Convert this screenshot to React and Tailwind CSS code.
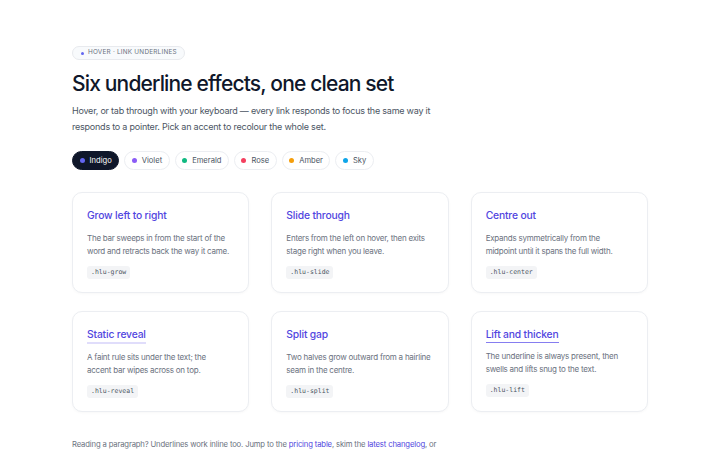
import React from 'react'

const accents = [
    { name: 'Indigo', dot: 'bg-[#6366f1]', active: true },
    { name: 'Violet', dot: 'bg-[#8b5cf6]' },
    { name: 'Emerald', dot: 'bg-[#10b981]' },
    { name: 'Rose', dot: 'bg-[#f43f5e]' },
    { name: 'Amber', dot: 'bg-[#f59e0b]' },
    { name: 'Sky', dot: 'bg-[#0ea5e9]' },
]

// each description is split where the reference wraps it
const effects = [
    { title: 'Grow left to right', lines: ['The bar sweeps in from the start of the', 'word and retracts back the way it came.'], cls: '.hlu-grow' },
    { title: 'Slide through', lines: ['Enters from the left on hover, then exits', 'stage right when you leave.'], cls: '.hlu-slide' },
    { title: 'Centre out', lines: ['Expands symmetrically from the', 'midpoint until it spans the full width.'], cls: '.hlu-center' },
    { title: 'Static reveal', lines: ['A faint rule sits under the text; the', 'accent bar wipes across on top.'], cls: '.hlu-reveal', line: 'faint' },
    { title: 'Split gap', lines: ['Two halves grow outward from a hairline', 'seam in the centre.'], cls: '.hlu-split' },
    { title: 'Lift and thicken', lines: ['The underline is always present, then', 'swells and lifts snug to the text.'], cls: '.hlu-lift', line: 'solid' },
]

const EffectCard = ({ title, lines, cls, line }) => {
    const underline = line === 'faint'
        ? 'border-b-2 border-[#e0ddfb]'
        : line === 'solid'
            ? 'border-b-[1.5px] border-[#867df0]'
            : 'border-b-2 border-transparent'

    return (
        <div className="flex flex-col items-start rounded-[10px] border border-[#eceef2] bg-white px-[14px] pt-[14px] h-[101px] shadow-[0_1px_3px_rgba(15,23,42,0.03)]">
            <a href="#" className={`block text-[10.3px] leading-[16px] font-medium text-[#5145e0] tracking-[-0.015em] ${underline}`}>
                {title}
            </a>
            <p className="mt-[6.5px] text-[8px] leading-[13px] tracking-[-0.03em] text-[#6b7280] whitespace-nowrap">
                {lines[0]}<br />{lines[1]}
            </p>
            <code className="mt-[8.5px] h-[13px] flex items-center rounded-[3px] bg-[#f3f4f6] px-[4px] text-[6.5px] text-[#4b5563] font-['DejaVu_Sans_Mono',monospace]">
                {cls}
            </code>
        </div>
    )
}

const App = () => {
    return (
        <div className="min-h-[450px] bg-white font-['Inter',sans-serif] text-[#111827] overflow-hidden">
            <div className="w-[576px] ml-[72px] pt-[46px]">
                <div className="flex w-fit items-center gap-[4px] h-[14px] pl-[8px] pr-[7px] rounded-full border border-[#e8eaee] bg-[#f8fafc] text-[6.4px] tracking-[0.035em] text-[#6b7280]">
                    <span className="w-[3px] h-[3px] rounded-full bg-[#6366f1]" />
                    HOVER · LINK UNDERLINES
                </div>

                <h1 className="mt-[10px] text-[21px] leading-[28px] font-medium tracking-[-0.04em] text-[#0f172a]">
                    Six underline effects, one clean set
                </h1>

                <p className="mt-[5px] text-[9px] leading-[16px] tracking-[-0.025em] text-[#4b5563] whitespace-nowrap">
                    Hover, or tab through with your keyboard — every link responds to focus the same way it<br />
                    responds to a pointer. Pick an accent to recolour the whole set.
                </p>

                <div className="mt-[16px] flex items-center gap-[5px]">
                    {accents.map((a) => (
                        <button
                            key={a.name}
                            className={`flex items-center gap-[5px] h-[19px] px-[6.5px] rounded-full text-[7.6px] ${a.active
                                ? 'bg-[#0f172a] text-white border border-[#0f172a]'
                                : 'bg-white text-[#4b5563] border border-[#eceef2]'}`}
                        >
                            <span className={`w-[5px] h-[5px] rounded-full ${a.dot}`} />
                            {a.name}
                        </button>
                    ))}
                </div>

                <div className="mt-[22px] grid grid-cols-3 gap-x-[22px] gap-y-[18px]">
                    {effects.map((e) => (
                        <EffectCard key={e.cls} {...e} />
                    ))}
                </div>

                <p className="mt-[26px] text-[7.7px] leading-[13px] tracking-[-0.02em] text-[#6b7280] whitespace-nowrap">
                    Reading a paragraph? Underlines work inline too. Jump to the <a href="#" className="text-[#5145e0]">pricing table</a>, skim the <a href="#" className="text-[#5145e0]">latest changelog</a>, or
                </p>
            </div>
        </div>
    )
}

export default App
